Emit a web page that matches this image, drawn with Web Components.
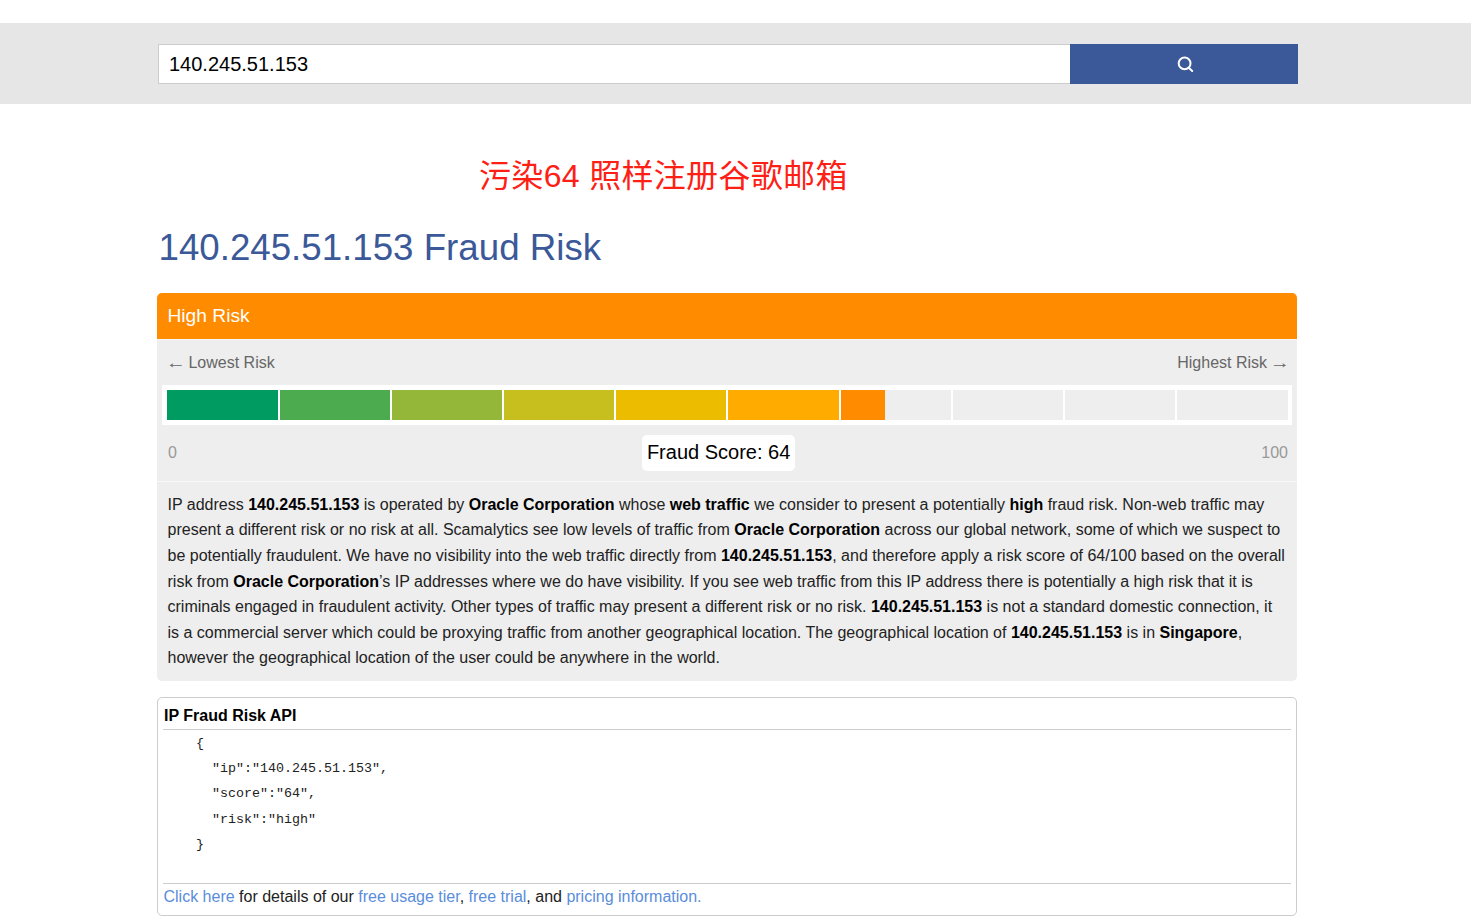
<!DOCTYPE html>
<html lang="en">
<head>
<meta charset="utf-8">
<title>140.245.51.153 Fraud Risk</title>
<style>
  html, body { margin: 0; padding: 0; background: #fff; overflow: hidden; height: 923px; }
  body { font-family: "Liberation Sans", Arial, sans-serif; font-size: 16px; color: #222; }
  main { display: block; width: 1140px; margin-left: 157px; }
  b { color: #000; }
  a { color: #5a8ddb; text-decoration: none; }
  h1 { margin: 0; padding: 0 0 0 1.5px; font-size: 36.7px; line-height: 42px; font-weight: 400; color: #3b5998; height: 66px; }
</style>
</head>
<body>

<template id="search-tpl">
  <style>
    :host { display: block; margin-top: 23px; background: #e6e6e6; padding: 21px 0 20px 158px; }
    .row { display: flex; width: 1140px; height: 40px; }
    .field { flex: none; width: 912px; box-sizing: border-box; background: #fff; border: 1px solid #ccc; border-right: 0;
      padding-left: 10px; font-size: 20px; line-height: 38px; color: #000; }
    .go { flex: none; width: 228px; background: #3b5998; display: flex; align-items: center; justify-content: center; }
    svg { display: block; width: 18px; height: 18px; margin-left: 1px; }
  </style>
  <div class="row">
    <div class="field"><slot></slot></div>
    <div class="go">
      <svg viewBox="0 0 18 18" fill="none" stroke="#fff" stroke-width="2" stroke-linecap="round"><circle cx="8.6" cy="8.4" r="5.9"/><path d="M13 13l3.2 3"/></svg>
    </div>
  </div>
</template>

<template id="notice-tpl">
  <style>
    :host { display: block; padding: 52px 0 0 322px; height: 71px; font-size: 32px; line-height: 40px; color: #ff2015; letter-spacing: .33px;
      font-family: "Liberation Sans", "Noto Sans CJK SC", sans-serif; white-space: nowrap; }
  </style>
  <slot></slot>
</template>

<template id="meter-tpl">
  <style>
    :host { display: block; background: #fff; margin: 0 5px; padding: 5px 4px 5px 5px; height: 30px; }
    .bar { display: grid; grid-template-columns: 111px 110px 110px 110px 110px 111px 110px 110px 110px 111px; gap: 2px; height: 30px; }
    .seg { background: #eee; }
    .seg i { display: block; height: 100%; }
  </style>
  <div class="bar"></div>
</template>

<template id="panel-tpl">
  <style>
    :host { display: block; background: #eee; border-radius: 5px; overflow: hidden; height: 388px; }
    .head { background: #ff8c00; color: #fff; font-size: 19.2px; line-height: 45px; padding-left: 10.5px; height: 46px; border-bottom: 1px solid #f8f8f8; }
    .ends { display: flex; justify-content: space-between; padding: 0 9.5px 0 11px; height: 45px; line-height: 46px; color: #666; }
    .arrow { display: inline-block; transform: scaleX(1.25); }
    .arrow.l { transform-origin: left center; margin: 0 2.5px 0 -2.5px; }
    .arrow.r { transform-origin: right center; margin: 0 -2px 0 2px; }
    .foot { display: flex; justify-content: space-between; align-items: center; height: 56px; padding: 0 9px 0 11px; color: #999; border-bottom: 1px solid #f8f8f8; }
    .pill { background: #fff; color: #000; border-radius: 5px; font-size: 20px; line-height: 34px; padding: 0 5px 2px; margin-top: -1px; margin-left: -1px; }
    .body { padding: 9.9px 9.5px 0 10.5px; line-height: 25.6px; }
  </style>
  <div class="head"><slot name="title"></slot></div>
  <div class="ends"><span><span class="arrow l">&larr;</span> Lowest Risk</span><span>Highest Risk <span class="arrow r">&rarr;</span></span></div>
  <slot name="meter"></slot>
  <div class="foot"><span>0</span><span class="pill"><slot name="score"></slot></span><span>100</span></div>
  <div class="body"><slot></slot></div>
</template>

<template id="api-tpl">
  <style>
    :host { display: block; box-sizing: border-box; margin-top: 16px; height: 219px; border: 1px solid #ccc; border-radius: 5px; padding: 0 5px; }
    .title { font-weight: 700; color: #000; line-height: 35px; height: 31px; padding-left: 1px; border-bottom: 1px solid #ccc; }
    pre { margin: 0; height: 153px; box-sizing: border-box; padding: .5px 0 0 1px; font-family: "Liberation Mono", monospace; font-size: 13.33px; line-height: 25.4px; color: #222; }
    .foot { border-top: 1px solid #ccc; line-height: 26px; padding-left: .5px; }
  </style>
  <div class="title"><slot name="title"></slot></div>
  <pre><slot name="code"></slot></pre>
  <div class="foot"><slot></slot></div>
</template>

<ip-search>140.245.51.153</ip-search>
<main>
  <red-notice>污染64 照样注册谷歌邮箱</red-notice>
  <h1>140.245.51.153 Fraud Risk</h1>
  <risk-panel>
    <span slot="title">High Risk</span>
    <risk-meter slot="meter" score="64"></risk-meter>
    <span slot="score">Fraud Score: 64</span>
    IP address <b>140.245.51.153</b> is operated by <b>Oracle Corporation</b> whose <b>web traffic</b> we consider to present a potentially <b>high</b> fraud risk. Non-web traffic may present a different risk or no risk at all. Scamalytics see low levels of traffic from <b>Oracle Corporation</b> across our global network, some of which we suspect to be potentially fraudulent. We have no visibility into the web traffic directly from <b>140.245.51.153</b>, and therefore apply a risk score of 64/100 based on the overall risk from <b>Oracle Corporation</b>’s IP addresses where we do have visibility. If you see web traffic from this IP address there is potentially a high risk that it is criminals engaged in fraudulent activity. Other types of traffic may present a different risk or no risk. <b>140.245.51.153</b> is not a standard domestic connection, it is a commercial server which could be proxying traffic from another geographical location. The geographical location of <b>140.245.51.153</b> is in <b>Singapore</b>, however the geographical location of the user could be anywhere in the world.
  </risk-panel>
  <api-box>
    <span slot="title">IP Fraud Risk API</span>
    <span slot="code">    {
      "ip":"140.245.51.153",
      "score":"64",
      "risk":"high"
    }</span>
    <a href="#">Click here</a> for details of our <a href="#">free usage tier</a>, <a href="#">free trial</a>, and <a href="#">pricing information.</a>
  </api-box>
</main>

<script>
  // every element clones its template into an open shadow root
  class TplElement extends HTMLElement {
    constructor(id) {
      super();
      this.attachShadow({ mode: 'open' });
      this.shadowRoot.appendChild(document.getElementById(id).content.cloneNode(true));
    }
  }

  class IpSearch extends TplElement { constructor() { super('search-tpl'); } }
  class RedNotice extends TplElement { constructor() { super('notice-tpl'); } }
  class RiskPanel extends TplElement { constructor() { super('panel-tpl'); } }
  class ApiBox extends TplElement { constructor() { super('api-tpl'); } }

  const SEG_COLORS = ['#009b61', '#4caa4f', '#94b73a', '#c6bf1e', '#ecbc00', '#ffab00', '#ff8c00'];

  class RiskMeter extends TplElement {
    constructor() { super('meter-tpl'); }

    connectedCallback() {
      const score = parseFloat(this.getAttribute('score')) || 0;
      const bar = this.shadowRoot.querySelector('.bar');
      for (let n = 0; n < 10; n++) {
        const seg = document.createElement('div');
        seg.className = 'seg';
        const fill = Math.max(0, Math.min(1, score / 10 - n));
        if (fill > 0) {
          const part = document.createElement('i');
          part.style.width = fill * 100 + '%';
          part.style.background = SEG_COLORS[n];
          seg.appendChild(part);
        }
        bar.appendChild(seg);
      }
    }
  }

  customElements.define('ip-search', IpSearch);
  customElements.define('red-notice', RedNotice);
  customElements.define('risk-panel', RiskPanel);
  customElements.define('risk-meter', RiskMeter);
  customElements.define('api-box', ApiBox);
</script>
</body>
</html>
